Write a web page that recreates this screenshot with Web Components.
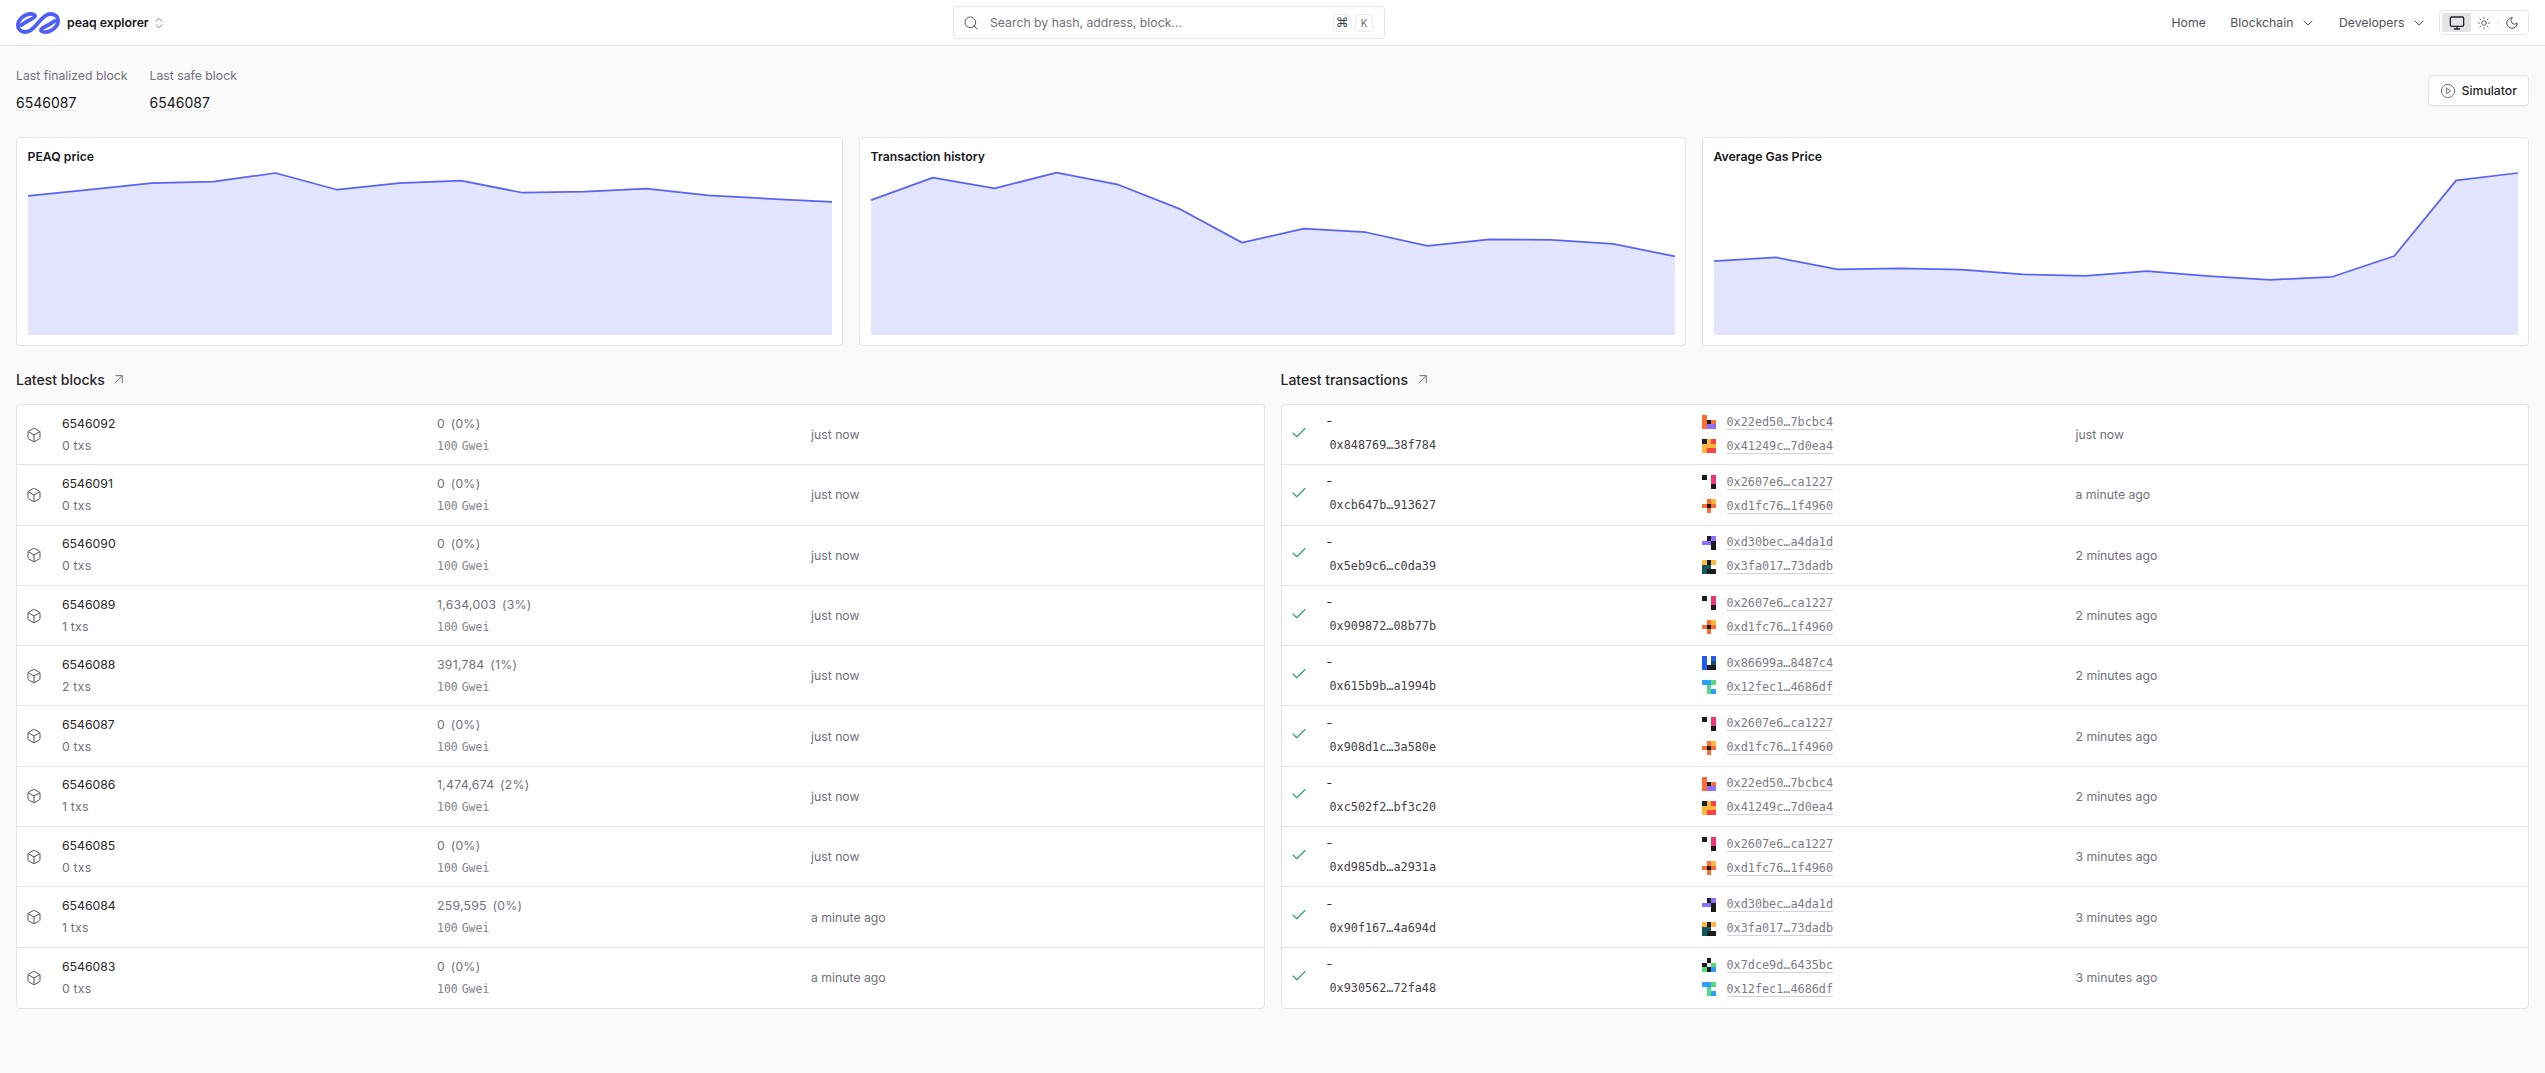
<!DOCTYPE html>
<html><head><meta charset="utf-8"><style>
html,body{margin:0;padding:0;background:#fafafa;font-family:Inter,"Liberation Sans",sans-serif;color:#18181b}
</style></head><body>
<app-header></app-header>
<main-page></main-page>
<script>
const ICON={
search:'<circle cx="11" cy="11" r="8"/><path d="m21 21-4.3-4.3"/>',
chev:'<path d="m6 9 6 6 6-6"/>',
mon:'<rect width="20" height="14" x="2" y="3" rx="2"/><path d="M8 21h8M12 17v4"/>',
sun:'<circle cx="12" cy="12" r="4"/><path d="M12 2v2M12 20v2M4.93 4.93l1.41 1.41M17.66 17.66l1.41 1.41M2 12h2M20 12h2M6.34 17.66l-1.41 1.41M19.07 4.93l-1.41 1.41"/>',
moon:'<path d="M12 3a6 6 0 0 0 9 9 9 9 0 1 1-9-9Z"/>',
play:'<circle cx="12" cy="12" r="10"/><polygon points="10 8 16 12 10 16 10 8"/>',
arrow:'<path d="M7 7h10v10M7 17 17 7"/>',
box:'<path d="M21 8a2 2 0 0 0-1-1.73l-7-4a2 2 0 0 0-2 0l-7 4A2 2 0 0 0 3 8v8a2 2 0 0 0 1 1.73l7 4a2 2 0 0 0 2 0l7-4A2 2 0 0 0 21 16Z"/><path d="m3.3 7 8.7 5 8.7-5M12 22V12"/>',
check:'<path d="M20 6 9 17l-5-5"/>',
updown:'<path d="m7 15 5 5 5-5M7 9l5-5 5 5"/>'
};
const svg=(n,s,c='currentColor',w=2)=>`<svg xmlns="http://www.w3.org/2000/svg" width="${s}" height="${s}" viewBox="0 0 24 24" fill="none" stroke="${c}" stroke-width="${w}" stroke-linecap="round" stroke-linejoin="round" style="display:block;flex:none">${ICON[n]}</svg>`;
class Base extends HTMLElement{
  render(html){ if(!this.shadowRoot) this.attachShadow({mode:'open'}); this.shadowRoot.innerHTML=html; }
}
class AppHeader extends Base{connectedCallback(){this.render(`<style>
:host{display:flex;align-items:center;height:45px;box-sizing:content-box;background:#fff;border-bottom:1px solid #e4e4e7;padding:0 16px;position:relative;justify-content:space-between}
.brand{display:flex;align-items:center;gap:7px;font-size:12.25px;font-weight:600;width:400px}
.brand span{margin-right:-4px}
.search{position:absolute;left:953px;top:6px;width:432px;height:33px;box-sizing:border-box;border:1px solid #e4e4e7;border-radius:4px;display:flex;align-items:center;padding:0 11px 0 9px;gap:11px;color:#71717a;font-size:12.25px;background:#fff}
.search span.t{flex:1}
.kbds{display:flex;gap:4px}
kbd{font:400 10px Inter,sans-serif;width:18px;height:18px;box-sizing:border-box;border:1px solid #ececee;border-radius:3px;display:flex;align-items:center;justify-content:center;color:#71717a}
kbd.cmd{font:500 13px "DejaVu Sans",sans-serif;color:#3f3f46}
nav{display:flex;align-items:center;font-size:12.25px;color:#52525b}
nav a{display:flex;align-items:center;gap:6.5px}
.mode{display:flex;align-items:center;border:1px solid #e4e4e7;border-radius:4px;height:25px;box-sizing:border-box;padding:2px;margin-left:12px;width:90px}
.mode i{display:flex;align-items:center;justify-content:center;height:19px}
.mode .on{background:#e4e4e7;border-radius:2px;width:29px;color:#27272a}
</style>
<div class="brand">
<svg width="44" height="22" viewBox="0 0 44 22" fill="none" stroke="#4e5ff7" stroke-width="3.8" stroke-linecap="round" stroke-linejoin="round" style="flex:none"><path d="M5.5 13 C9 10 15 7.5 18 5.5 C20.5 3.5 18 1.8 14.5 1.9 C8 2.1 1.9 8 1.9 13 C1.9 17.5 5.5 20 9.5 20 C14 20 18 16 22 11 C26 6 30 2 34.5 2 C38.5 2 42.1 4.5 42.1 9 C42.1 14 36 19.9 29.5 20.1 C26 20.2 23.5 18.5 26 16.5 C29 14.5 35 12 38.5 9"/></svg>
<span>peaq explorer</span>${svg('updown',14,'#71717a',1.5)}
</div>
<div class="search">${svg('search',16,'#52525b',1.5)}<span class="t">Search by hash, address, block...</span><div class="kbds"><kbd class="cmd">⌘</kbd><kbd>K</kbd></div></div>
<nav><a style="margin-right:24.5px">Home</a><a style="margin-right:23px">Blockchain ${svg('chev',16,'#52525b',1.5)}</a><a>Developers ${svg('chev',16,'#52525b',1.5)}</a>
<div class="mode"><i class="on">${svg('mon',16,'#27272a',2)}</i><i style="width:26px;margin-right:1px">${svg('sun',14,'#52525b',1.5)}</i><i style="width:1px;height:5px;background:#e4e4e7"></i><i style="width:26px">${svg('moon',14,'#52525b',1.7)}</i></div></nav>`)}}
class StatBlock extends Base{connectedCallback(){this.render(`<style>
:host{display:block}
.l{font-size:12.25px;color:#71717a;line-height:20px}
.v{font-size:14px;line-height:14px;margin-top:10px;display:inline-block;border-bottom:1px solid #e4e4e7;color:#18181b}
</style><div class="l">${this.getAttribute('label')}</div><div class="v">${this.getAttribute('value')}</div>`)}}
class SimButton extends Base{connectedCallback(){this.render(`<style>
:host{display:flex;align-items:center;gap:6px;height:31px;width:101px;box-sizing:border-box;padding:0 0 0 10.5px;background:#fff;border:1px solid #e4e4e7;border-radius:4px;font-size:12.25px;font-weight:500;color:#27272a;box-shadow:0 1px 2px rgba(0,0,0,.04)}
</style>${svg('play',16,'#71717a',1.5)}<span><slot></slot></span>`)}}
class ChartCard extends Base{connectedCallback(){
 const d=this.getAttribute('data').split(',').map(Number);
 const pts=d.map((y,i)=>`${i},${y}`).join(' ');
 this.render(`<style>
:host{display:block;background:#fff;border:1px solid #e4e4e7;border-radius:4px;box-sizing:border-box;height:209px;padding:9px 10.5px 0}
.t{font-size:12.25px;font-weight:600;line-height:20px;height:26px;color:#18181b}
svg{display:block;width:100%;height:162px;overflow:visible}
</style><div class="t">${this.getAttribute('title-text')}</div>
<svg viewBox="0 130 13 484" preserveAspectRatio="none"><polygon points="0,614 ${pts} 13,614" fill="#e3e4fd"/><polyline points="${pts}" fill="none" stroke="#5a63f8" stroke-width="1.75" vector-effect="non-scaling-stroke" stroke-linejoin="round"/></svg>`)}}
class SectionTitle extends Base{connectedCallback(){this.render(`<style>
:host{display:flex;align-items:center;gap:6.5px;font-size:14px;font-weight:500;height:24px;margin-bottom:13px;color:#27272a}
</style><span><slot></slot></span>${svg('arrow',16,'#71717a',1.5)}`)}}
class DataList extends Base{connectedCallback(){this.render(`<style>
:host{display:block;background:#fff;border:1px solid #e4e4e7;border-radius:4px;overflow:hidden}
</style><slot></slot>`)}}
const rowCss=`:host{display:grid;grid-template-columns:420px 374px 1fr;align-items:center;height:60.3px;box-sizing:border-box;border-bottom:1px solid #e4e4e7;font-size:12.25px}
:host(:last-child){border-bottom:0}
.a{display:flex;align-items:center}
.ic{display:flex;justify-content:flex-start}
.two{display:flex;flex-direction:column;gap:6px}
.two>*{line-height:16px}
.m{font-size:12.25px;color:#27272a}
.s{font-size:12.25px;color:#71717a;letter-spacing:.2px}
.gw{font-family:"DejaVu Sans Mono","Liberation Mono",monospace;font-size:11.5px;color:#82828a;word-spacing:-3px}
.mono{font-family:"DejaVu Sans Mono","Liberation Mono",monospace;font-size:11.8px;color:#3f3f46}
.time{font-size:12.25px;color:#71717a}`;
class BlockRow extends Base{connectedCallback(){const g=n=>this.getAttribute(n);this.render(`<style>${rowCss}
.ic{padding-left:9px;width:36px}
.g{font-size:12.25px;color:#71717a;word-spacing:2px;letter-spacing:.25px}
</style>
<div class="a"><div class="ic">${svg('box',16,'#52525b',1.5)}</div><div class="two"><span class="m">${g('num')}</span><span class="s">${g('txs')} txs</span></div></div>
<div class="two"><span class="g">${g('gas')}</span><span class="gw">100 Gwei</span></div>
<div class="time">${g('time')}</div>`)}}
const C={o:'#ff6b35',k:'#1c1c1e',p:'#8b6fff',y:'#ffb83d',r:'#ff4245',m:'#f03575',t:'#12565e',b:'#1f5cf5',g:'#55d97a',c:'#2f9fff','.':'#fff'};
const ID={'0x22ed50…7bcbc4':'o..okoopp','0x41249c…7d0ea4':'kyryyyyrr','0x2607e6…ca1227':'k.m..m..k','0xd1fc76…1f4960':'.oyoko.o.','0xd30bec…a4da1d':'.kpppk..k','0x3fa017…73dadb':'ykytt.tkk','0x86699a…8487c4':'b.bb.tbkk','0x12fec1…4686df':'ccg.g..gc','0x7dce9d…6435bc':'.k.k.ggkc'};
class IdentIcon extends Base{connectedCallback(){const s=ID[this.getAttribute('addr')]||'.........';
 this.render(`<style>:host{display:grid;grid-template-columns:5px 4px 5px;grid-template-rows:5px 4px 5px;width:14px;height:14px;flex:none}</style>`+[...s].map(c=>`<div style="background:${C[c]}"></div>`).join(''))}}
class AddrLink extends Base{connectedCallback(){const a=this.getAttribute('addr');this.render(`<style>
:host{display:flex;align-items:center;gap:11px;height:16px}
span{font-family:"DejaVu Sans Mono","Liberation Mono",monospace;font-size:11.8px;color:#7c7c84;border-bottom:1px solid #d4d4d8;line-height:14px}
</style><ident-icon addr="${a}"></ident-icon><span>${a}</span>`)}}
class TxRow extends Base{connectedCallback(){const g=n=>this.getAttribute(n);this.render(`<style>${rowCss}
.ic{padding-left:8px;width:37px;margin-top:-4px}
.dash{font-size:12.25px;color:#27272a}
.mono{margin-left:3px}
.two.addr{gap:8px;margin-top:-1px}
</style>
<div class="a"><div class="ic">${svg('check',18,'#2f9e66',1.5)}</div><div class="two" style="gap:8px;margin-top:-3px"><span class="dash">-</span><span class="mono">${g('hash')}</span></div></div>
<div class="two addr"><addr-link addr="${g('from')}"></addr-link><addr-link addr="${g('to')}"></addr-link></div>
<div class="time">${g('time')}</div>`)}}
class MainPage extends Base{connectedCallback(){
const blocks=[['6546092','0','0 (0%)','just now'],['6546091','0','0 (0%)','just now'],['6546090','0','0 (0%)','just now'],['6546089','1','1,634,003 (3%)','just now'],['6546088','2','391,784 (1%)','just now'],['6546087','0','0 (0%)','just now'],['6546086','1','1,474,674 (2%)','just now'],['6546085','0','0 (0%)','just now'],['6546084','1','259,595 (0%)','a minute ago'],['6546083','0','0 (0%)','a minute ago']];
const A='0x22ed50…7bcbc4',B='0x41249c…7d0ea4',D='0x2607e6…ca1227',E='0xd1fc76…1f4960',F='0xd30bec…a4da1d',H='0x3fa017…73dadb',I='0x86699a…8487c4',J='0x12fec1…4686df',K='0x7dce9d…6435bc';
const txs=[['0x848769…38f784',A,B,'just now'],['0xcb647b…913627',D,E,'a minute ago'],['0x5eb9c6…c0da39',F,H,'2 minutes ago'],['0x909872…08b77b',D,E,'2 minutes ago'],['0x615b9b…a1994b',I,J,'2 minutes ago'],['0x908d1c…3a580e',D,E,'2 minutes ago'],['0xc502f2…bf3c20',A,B,'2 minutes ago'],['0xd985db…a2931a',D,E,'3 minutes ago'],['0x90f167…4a694d',F,H,'3 minutes ago'],['0x930562…72fa48',K,J,'3 minutes ago']];
this.render(`<style>
:host{display:block;padding:13px 16px 0;height:1027px;box-sizing:border-box}
.top{display:flex;align-items:center;height:63px;margin-bottom:15px}
.stats{display:flex;gap:22px;flex:1;padding-bottom:3px}
.charts{display:grid;grid-template-columns:repeat(3,1fr);gap:16px;margin-bottom:21px}
.lists{display:grid;grid-template-columns:1fr 1fr;gap:16px}
</style>
<div class="top"><div class="stats"><stat-block label="Last finalized block" value="6546087"></stat-block><stat-block label="Last safe block" value="6546087"></stat-block></div><sim-button>Simulator</sim-button></div>
<div class="charts">
<chart-card title-text="PEAQ price" data="198,180,160,156,130,180,160,153,189,186,177,197,207,216"></chart-card>
<chart-card title-text="Transaction history" data="211,144,176,129,165,238,338,296,307,348,328,330,342,379"></chart-card>
<chart-card title-text="Average Gas Price" data="393,382,418,415,419,433,437,423,438,449,440,378,152,130"></chart-card>
</div>
<div class="lists">
<section><section-title>Latest blocks</section-title><data-list>${blocks.map(b=>`<block-row num="${b[0]}" txs="${b[1]}" gas="${b[2]}" time="${b[3]}"></block-row>`).join('')}</data-list></section>
<section><section-title>Latest transactions</section-title><data-list>${txs.map(t=>`<tx-row hash="${t[0]}" from="${t[1]}" to="${t[2]}" time="${t[3]}"></tx-row>`).join('')}</data-list></section>
</div>`)}}
customElements.define('ident-icon',IdentIcon);
customElements.define('addr-link',AddrLink);
customElements.define('stat-block',StatBlock);
customElements.define('sim-button',SimButton);
customElements.define('chart-card',ChartCard);
customElements.define('section-title',SectionTitle);
customElements.define('data-list',DataList);
customElements.define('block-row',BlockRow);
customElements.define('tx-row',TxRow);
customElements.define('app-header',AppHeader);
customElements.define('main-page',MainPage);
</script>
</body></html>
